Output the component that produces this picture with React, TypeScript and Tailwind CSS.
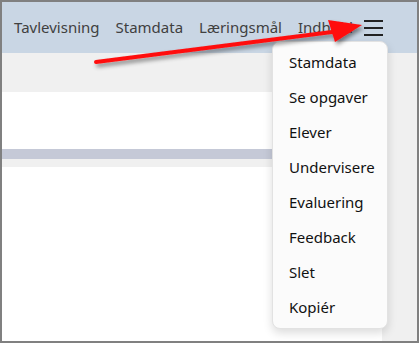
const navItems = ['Tavlevisning', 'Stamdata', 'Læringsmål', 'Indhold'];
const menuItems = ['Stamdata', 'Se opgaver', 'Elever', 'Undervisere', 'Evaluering', 'Feedback', 'Slet', 'Kopiér'];

export default function App() {
  return (
    <div
      className="relative w-[419px] h-[343px] border-2 border-[#808080] bg-[#f0f0f0] overflow-hidden"
      style={{ fontFamily: '"Noto Sans", "Open Sans", sans-serif' }}
    >
      {/* Top nav */}
      <div className="flex items-center h-[51px] bg-[#c9d6e4] pl-3 pr-[34px]">
        <nav className="flex gap-4 text-[15px] text-[#404040]">
          {navItems.map((item) => (
            <span key={item}>{item}</span>
          ))}
        </nav>
        <div className="ml-auto flex flex-col gap-[5px] w-[19px]">
          <span className="h-[2px] bg-[#222]" />
          <span className="h-[2px] bg-[#222]" />
          <span className="h-[2px] bg-[#222]" />
        </div>
      </div>

      {/* Sub bar */}
      <div className="h-[39px] bg-[#f0f0f0]" />

      {/* Content */}
      <div className="flex h-[249px]">
        <div className="w-[380px] bg-white pt-[57px]">
          <div className="h-[10px] bg-[#c5c9d7]" />
          <div className="h-[8px] bg-[#f0f0f0]" />
        </div>
        <div className="flex-1 bg-[#f0f0f0]" />
      </div>

      {/* Dropdown menu */}
      <div className="absolute left-[270px] top-[39px] w-[116px] h-[288px] rounded-lg border border-[#e2e2e2] bg-[#fbfbfb] shadow-[0_4px_10px_rgba(0,0,0,0.14)] pt-[3px]">
        {menuItems.map((item) => (
          <div key={item} className="h-[35px] pl-4 flex items-center text-[15px] text-[#111]">
            {item}
          </div>
        ))}
      </div>

      {/* Red arrow annotation */}
      <svg className="absolute left-0 top-0 pointer-events-none" width="419" height="343">
        <defs>
          <filter id="sh" x="-10%" y="-50%" width="120%" height="200%">
            <feDropShadow dx="2" dy="3" stdDeviation="2" floodColor="#000" floodOpacity="0.45" />
          </filter>
        </defs>
        <g filter="url(#sh)" transform="translate(-2,-2)">
          <line x1="96" y1="62" x2="340" y2="31" stroke="#ff0d0d" strokeWidth="4" strokeLinecap="round" />
          <polygon points="362,25 328,20 335,42" fill="#ff0d0d" />
        </g>
      </svg>
    </div>
  );
}
